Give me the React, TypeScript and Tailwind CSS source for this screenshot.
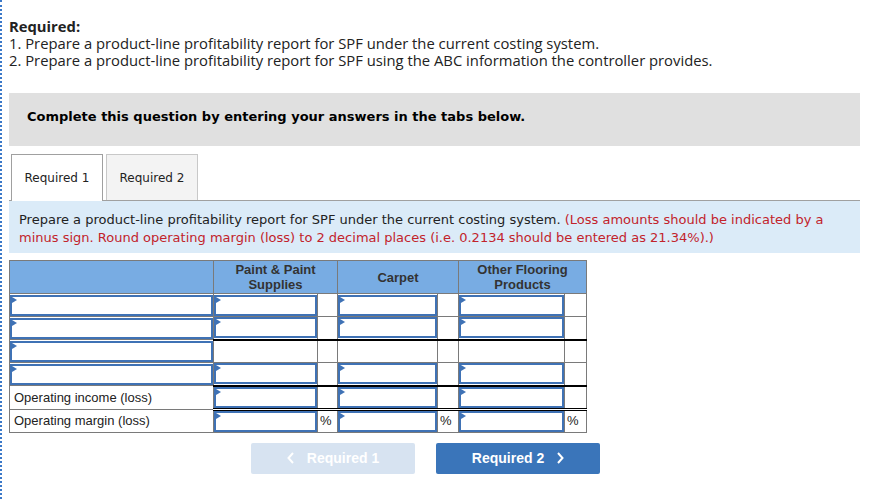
import React from 'react';

const sans = { fontFamily: '"Open Sans", Lato, sans-serif' };
const verdana = { fontFamily: '"DejaVu Sans", Verdana, sans-serif' };
const arial = { fontFamily: '"Liberation Sans", Arial, sans-serif' };

function Field({ arrow = true }: { arrow?: boolean }) {
  return (
    <div className="relative h-[21px] border-2 border-[#3f72b5] bg-white">
      {arrow && (
        <span className="absolute left-0 top-0 h-0 w-0 border-y-[3px] border-l-[5px] border-y-transparent border-l-[#3f72b5]" />
      )}
    </div>
  );
}

type Row = {
  label?: string;
  inputs: boolean;
  pct: boolean;
  top?: 'single' | 'double';
};

const rows: Row[] = [
  { inputs: true, pct: false },
  { inputs: true, pct: false },
  { inputs: false, pct: false, top: 'single' },
  { inputs: true, pct: false },
  { label: 'Operating income (loss)', inputs: true, pct: false, top: 'single' },
  { label: 'Operating margin (loss)', inputs: true, pct: true, top: 'double' },
];

export default function App() {
  return (
    <div className="min-h-[499px] border-l-2 border-dotted border-[#3a78c8] bg-white">
      <div className="ml-[7px] w-[851px] pt-[18px]">
        <div className="text-[14.8px] leading-[17px] text-[#222]" style={sans}>
          <p className="font-bold">Required:</p>
          <p>1. Prepare a product-line profitability report for SPF under the current costing system.</p>
          <p>2. Prepare a product-line profitability report for SPF using the ABC information the controller provides.</p>
        </div>

        <div className="mt-[24px] flex h-[53px] items-center bg-[#e0e0e0] pb-[5px] pl-[18px]">
          <span className="text-[13px] font-bold text-black" style={verdana}>
            Complete this question by entering your answers in the tabs below.
          </span>
        </div>

        <div className="mt-[8px] flex gap-[3px] border-b border-[#a0a0a0] pl-[2px]" style={verdana}>
          <div className="-mb-px flex h-[47px] w-[92px] items-center justify-center border border-b-0 border-[#a0a0a0] bg-white text-[12px] text-[#222]">
            Required 1
          </div>
          <div className="flex h-[46px] w-[92px] items-center justify-center border border-b-0 border-[#c8c8c8] bg-[#f3f3f3] text-[12px] text-[#222]">
            Required 2
          </div>
        </div>

        <div className="h-[52px] bg-[#dbebf8] px-[10px] pt-[10px] text-[13px] leading-[18px] text-[#222]" style={verdana}>
          Prepare a product-line profitability report for SPF under the current costing system.{' '}
          <span className="leading-[18px] text-[#c2232b]">
            (Loss amounts should be indicated by a minus sign. Round operating margin (loss) to 2 decimal places (i.e. 0.2134 should be entered as 21.34%).)
          </span>
        </div>

        <table className="mt-[7px] border-collapse text-[13px] text-[#222]" style={arial}>
          <colgroup>
            <col className="w-[204px]" />
            <col className="w-[104px]" />
            <col className="w-[20px]" />
            <col className="w-[100px]" />
            <col className="w-[21px]" />
            <col className="w-[106px]" />
            <col className="w-[22px]" />
          </colgroup>
          <thead>
            <tr className="h-[33px] bg-[#78ace3] leading-[15px] text-[#333]">
              <th className="border border-[#7a7a7a]" />
              <th colSpan={2} className="border border-[#7a7a7a] font-bold">
                Paint &amp; Paint
                <br />
                Supplies
              </th>
              <th colSpan={2} className="border border-[#7a7a7a] font-bold">
                Carpet
              </th>
              <th colSpan={2} className="border border-[#7a7a7a] font-bold">
                Other Flooring
                <br />
                Products
              </th>
            </tr>
          </thead>
          <tbody>
            {rows.map((r, i) => {
              const top =
                r.top === 'single'
                  ? 'border-t-2 border-t-black'
                  : r.top === 'double'
                    ? 'border-t-[3px] border-t-black border-double'
                    : '';
              const valueCell = `border border-[#7a7a7a] p-0 ${top}`;
              const pctCell = `border border-[#7a7a7a] px-[2px] text-left align-middle ${top}`;
              return (
                <tr key={i} className="h-[23px]">
                  <td className="border border-[#7a7a7a] p-0">
                    {r.label ? <div className="px-[4px] leading-[21px]">{r.label}</div> : <Field />}
                  </td>
                  <td className={valueCell}>{r.inputs ? <Field /> : null}</td>
                  <td className={pctCell}>{r.pct ? '%' : ''}</td>
                  <td className={valueCell}>{r.inputs ? <Field /> : null}</td>
                  <td className={pctCell}>{r.pct ? '%' : ''}</td>
                  <td className={valueCell}>{r.inputs ? <Field /> : null}</td>
                  <td className={pctCell}>{r.pct ? '%' : ''}</td>
                </tr>
              );
            })}
          </tbody>
        </table>

        <div className="mt-[10px] flex gap-[21px] pl-[242px]" style={arial}>
          <button className="flex h-[31px] w-[164px] items-center justify-center gap-[12px] rounded-[2px] bg-[#d7e3f1] text-[14px] font-bold text-white">
            <svg width="8" height="12" viewBox="0 0 8 12" fill="none" stroke="currentColor" strokeWidth="2">
              <path d="M6 1 L1.5 6 L6 11" />
            </svg>
            Required 1
          </button>
          <button className="flex h-[31px] w-[164px] items-center justify-center gap-[12px] rounded-[2px] bg-[#3a75ba] text-[14px] font-bold text-white">
            Required 2
            <svg width="8" height="12" viewBox="0 0 8 12" fill="none" stroke="currentColor" strokeWidth="2">
              <path d="M2 1 L6.5 6 L2 11" />
            </svg>
          </button>
        </div>
      </div>
    </div>
  );
}
